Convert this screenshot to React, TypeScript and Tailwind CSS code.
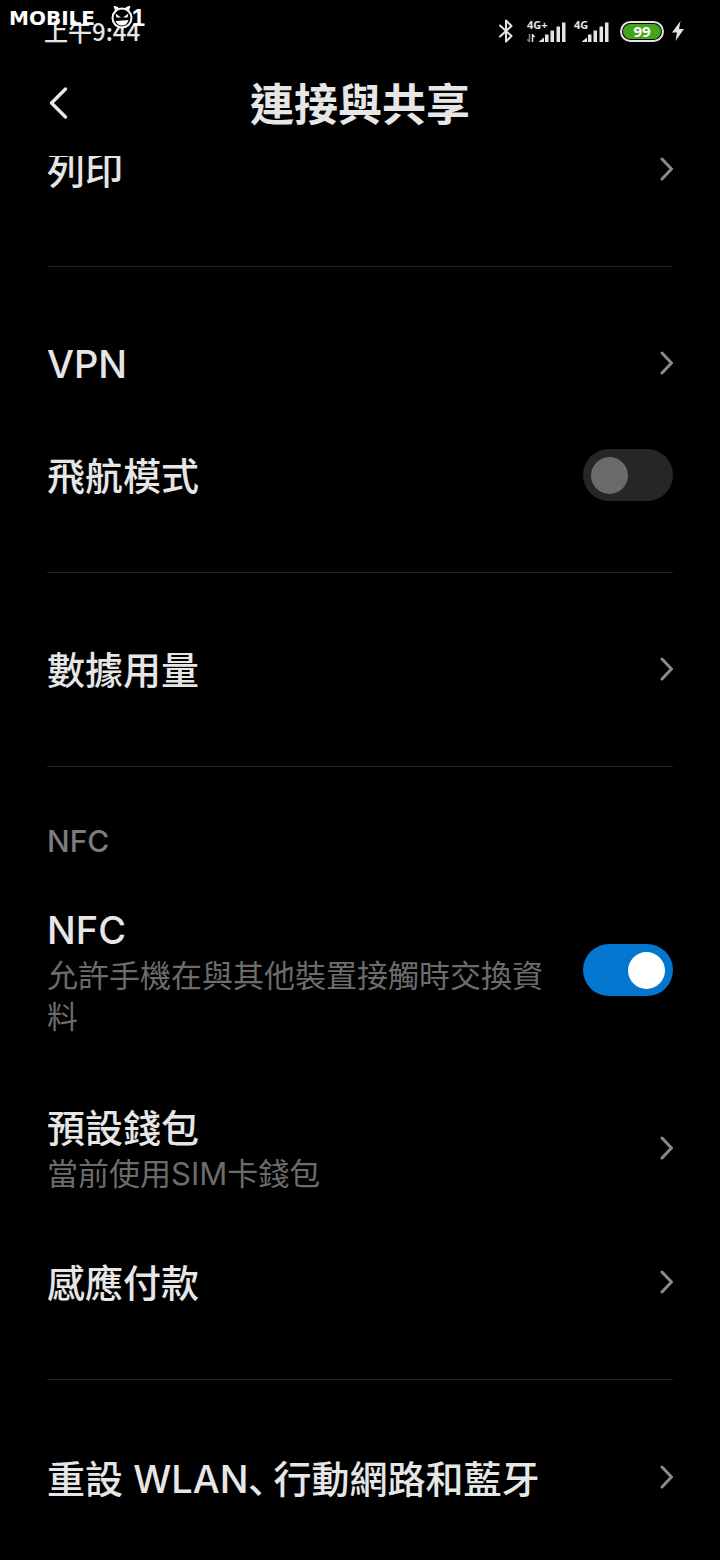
import React, { useState } from 'react';

function Chevron() {
  return (
    <svg className="w-4 h-6 shrink-0" viewBox="0 0 16 24" fill="none" stroke="#8a8a8a" strokeWidth="3" strokeLinecap="round" strokeLinejoin="round">
      <path d="M5 2 L14.500 12 L5 22" />
    </svg>
  );
}

function Divider() {
  return <hr className="mt-[41px] mb-10 border-t border-[#222]" />;
}

type RowProps = { title: React.ReactNode; subtitle?: string };

function RowText({ title, subtitle }: RowProps) {
  return (
    <span className="flex-1 min-w-0">
      <span className="block pt-0.5 text-[38px] leading-[50px] font-medium">{title}</span>
      {subtitle && (
        <span className="block text-[31px] leading-[41px] text-[#6c6c6c]">{subtitle}</span>
      )}
    </span>
  );
}

function LinkRow({ title, subtitle }: RowProps) {
  return (
    <a href="#" className={`flex items-center gap-6 ${subtitle ? 'py-8' : 'py-[30px]'}`}>
      <RowText title={title} subtitle={subtitle} />
      <Chevron />
    </a>
  );
}

function SwitchRow({ title, subtitle, initial }: RowProps & { initial: boolean }) {
  const [on, setOn] = useState(initial);
  return (
    <label className={`flex items-center gap-6 cursor-pointer ${subtitle ? 'py-8' : 'py-[30px]'}`}>
      <RowText title={title} subtitle={subtitle} />
      <input
        type="checkbox"
        role="switch"
        checked={on}
        onChange={(e) => setOn(e.target.checked)}
        className="appearance-none flex items-center shrink-0 w-[90px] h-[52px] px-2 rounded-full bg-[#262626] checked:bg-[#0377d0] checked:justify-end before:block before:w-[37px] before:h-[37px] before:rounded-full before:bg-[#6a6a6a] checked:before:bg-white"
      />
    </label>
  );
}

function Signal({ label, data }: { label: string; data?: boolean }) {
  return (
    <div className={`relative h-6 flex justify-end items-end ${data ? 'w-[39px]' : 'w-[35px]'}`}>
      <span className="absolute left-0 top-0 font-['Open_Sans'] text-[11px] leading-[11px] font-bold">{label}</span>
      {data && (
        <svg className="w-2 h-2 mr-1 mb-px" viewBox="0 0 8 8" fill="none" strokeWidth="1.5">
          <path d="M2.500 0 V7.5 L0.3 5.5" stroke="#8a8a8a" />
          <path d="M5.500 8 V0.8 L7.6 3" stroke="#e4e4e4" />
        </svg>
      )}
      <svg className="w-[27px] h-[21px]" viewBox="0 0 27 21" fill="#e4e4e4">
        <path d="M-0.500 20 L5 15.500 V20 Z" />
        <rect x="6" y="12.5" width="3.5" height="7.5" />
        <rect x="11.5" y="8.5" width="3.5" height="11.5" />
        <rect x="17.5" y="4.5" width="3.5" height="15.5" />
        <rect x="23" y="0.500" width="3.5" height="19.5" />
      </svg>
    </div>
  );
}

// Site logo stamped over the top left corner
function Watermark() {
  return (
    <div className="absolute left-[9px] top-1 w-[136px] h-7 flex items-center justify-between text-white">
      <span className="font-['DejaVu_Sans'] font-bold text-xl leading-7">MOBILE</span>
      <span className="flex items-center">
        <svg className="w-7 h-7" viewBox="0 0 28 28" fill="none" stroke="#fff" strokeWidth="2">
          <path d="M7.500 6 L6 2.500 Q9 2.500 11 4.5 M17 4.5 Q19 2.500 22 2.500 L20.500 6" fill="#fff" strokeWidth="1" />
          <circle cx="14" cy="14" r="9.5" fill="#000" />
          <path d="M7.5 9.5 L13 13.5 L8.5 13.5 Z M20.5 9.5 L15 13.5 L19.5 13.5 Z" fill="#fff" stroke="none" />
          <path d="M7.5 17 L20.5 16 Q19 21.5 14 21.5 Q9.500 21.5 7.5 17 Z" fill="#fff" stroke="none" />
        </svg>
        <span className="-ml-1 font-['Liberation_Sans'] font-bold text-2xl leading-7">1</span>
      </span>
    </div>
  );
}

function StatusBar() {
  return (
    <div className="relative h-[62px] flex items-center justify-between pl-11 pr-9">
      <span className="font-['Noto_Sans_CJK_TC',sans-serif] text-2xl font-medium">上午9:44</span>
      <Watermark />
      <div className="flex items-center">
        <svg className="w-4 h-6 mr-3" viewBox="0 0 16 24" fill="none" stroke="#e4e4e4" strokeWidth="2" strokeLinejoin="round" strokeLinecap="round">
          <path d="M1 6.500 L12.500 17 L7 22.500 V1.500 L12.500 7 L1 17.500" />
        </svg>
        <Signal label="4G+" data />
        <span className="w-2" />
        <Signal label="4G" />
        <span className="ml-[11px] w-11 h-[21px] rounded-full border-2 border-[#e4e4e4] p-px flex">
          <span className="flex-1 rounded-full bg-[#44a51c] flex items-center justify-center font-['Open_Sans'] text-white text-[15px] leading-[15px] font-bold">
            99
          </span>
        </span>
        <svg className="ml-2 w-3 h-5" viewBox="0 0 12 20" fill="#e4e4e4">
          <path d="M8.500 0 L0 11.500 H5 L3.500 20 L12 8 H7 Z" />
        </svg>
      </div>
    </div>
  );
}

export default function App() {
  return (
    <div className="min-h-screen bg-black text-[#e6e6e6] font-['Inter','Noto_Sans_CJK_TC',sans-serif] overflow-hidden">
      <header className="sticky top-0 z-10 bg-black">
        <StatusBar />
        <div className="h-[94px] px-11 pb-2 grid grid-cols-[32px_1fr_32px] items-center">
          <button type="button" aria-label="返回" className="h-10 mb-1 flex items-center">
            <svg className="w-7 h-9" viewBox="0 0 28 36" fill="none" stroke="#e6e6e6" strokeWidth="3.500" strokeLinecap="round" strokeLinejoin="round">
              <path d="M21.500 4 L7.500 18 L21.500 32" />
            </svg>
          </button>
          <h1 className="text-center text-[44px] leading-[60px] font-bold">連接與共享</h1>
        </div>
      </header>

      {/* The list is scrolled a little way under the header */}
      <main className="-mt-[43px] px-[47px] pb-6">
        <LinkRow title="列印" />
        <Divider />
        <LinkRow title="VPN" />
        <SwitchRow title="飛航模式" initial={false} />
        <Divider />
        <LinkRow title="數據用量" />
        <Divider />
        <h2 className="h-16 pt-1 flex items-center text-[30px] font-medium text-[#7c7c7c]">NFC</h2>
        <SwitchRow title="NFC" subtitle="允許手機在與其他裝置接觸時交換資料" initial={true} />
        <LinkRow title="預設錢包" subtitle="當前使用SIM卡錢包" />
        <LinkRow title="感應付款" />
        <Divider />
        <LinkRow
          title={
            <>
              重設 WLAN<span lang="ja" className="mr-1.5 font-['Noto_Sans_CJK_JP',sans-serif] [font-feature-settings:'palt']">、</span>行動網路和藍牙
            </>
          }
        />
      </main>
    </div>
  );
}
